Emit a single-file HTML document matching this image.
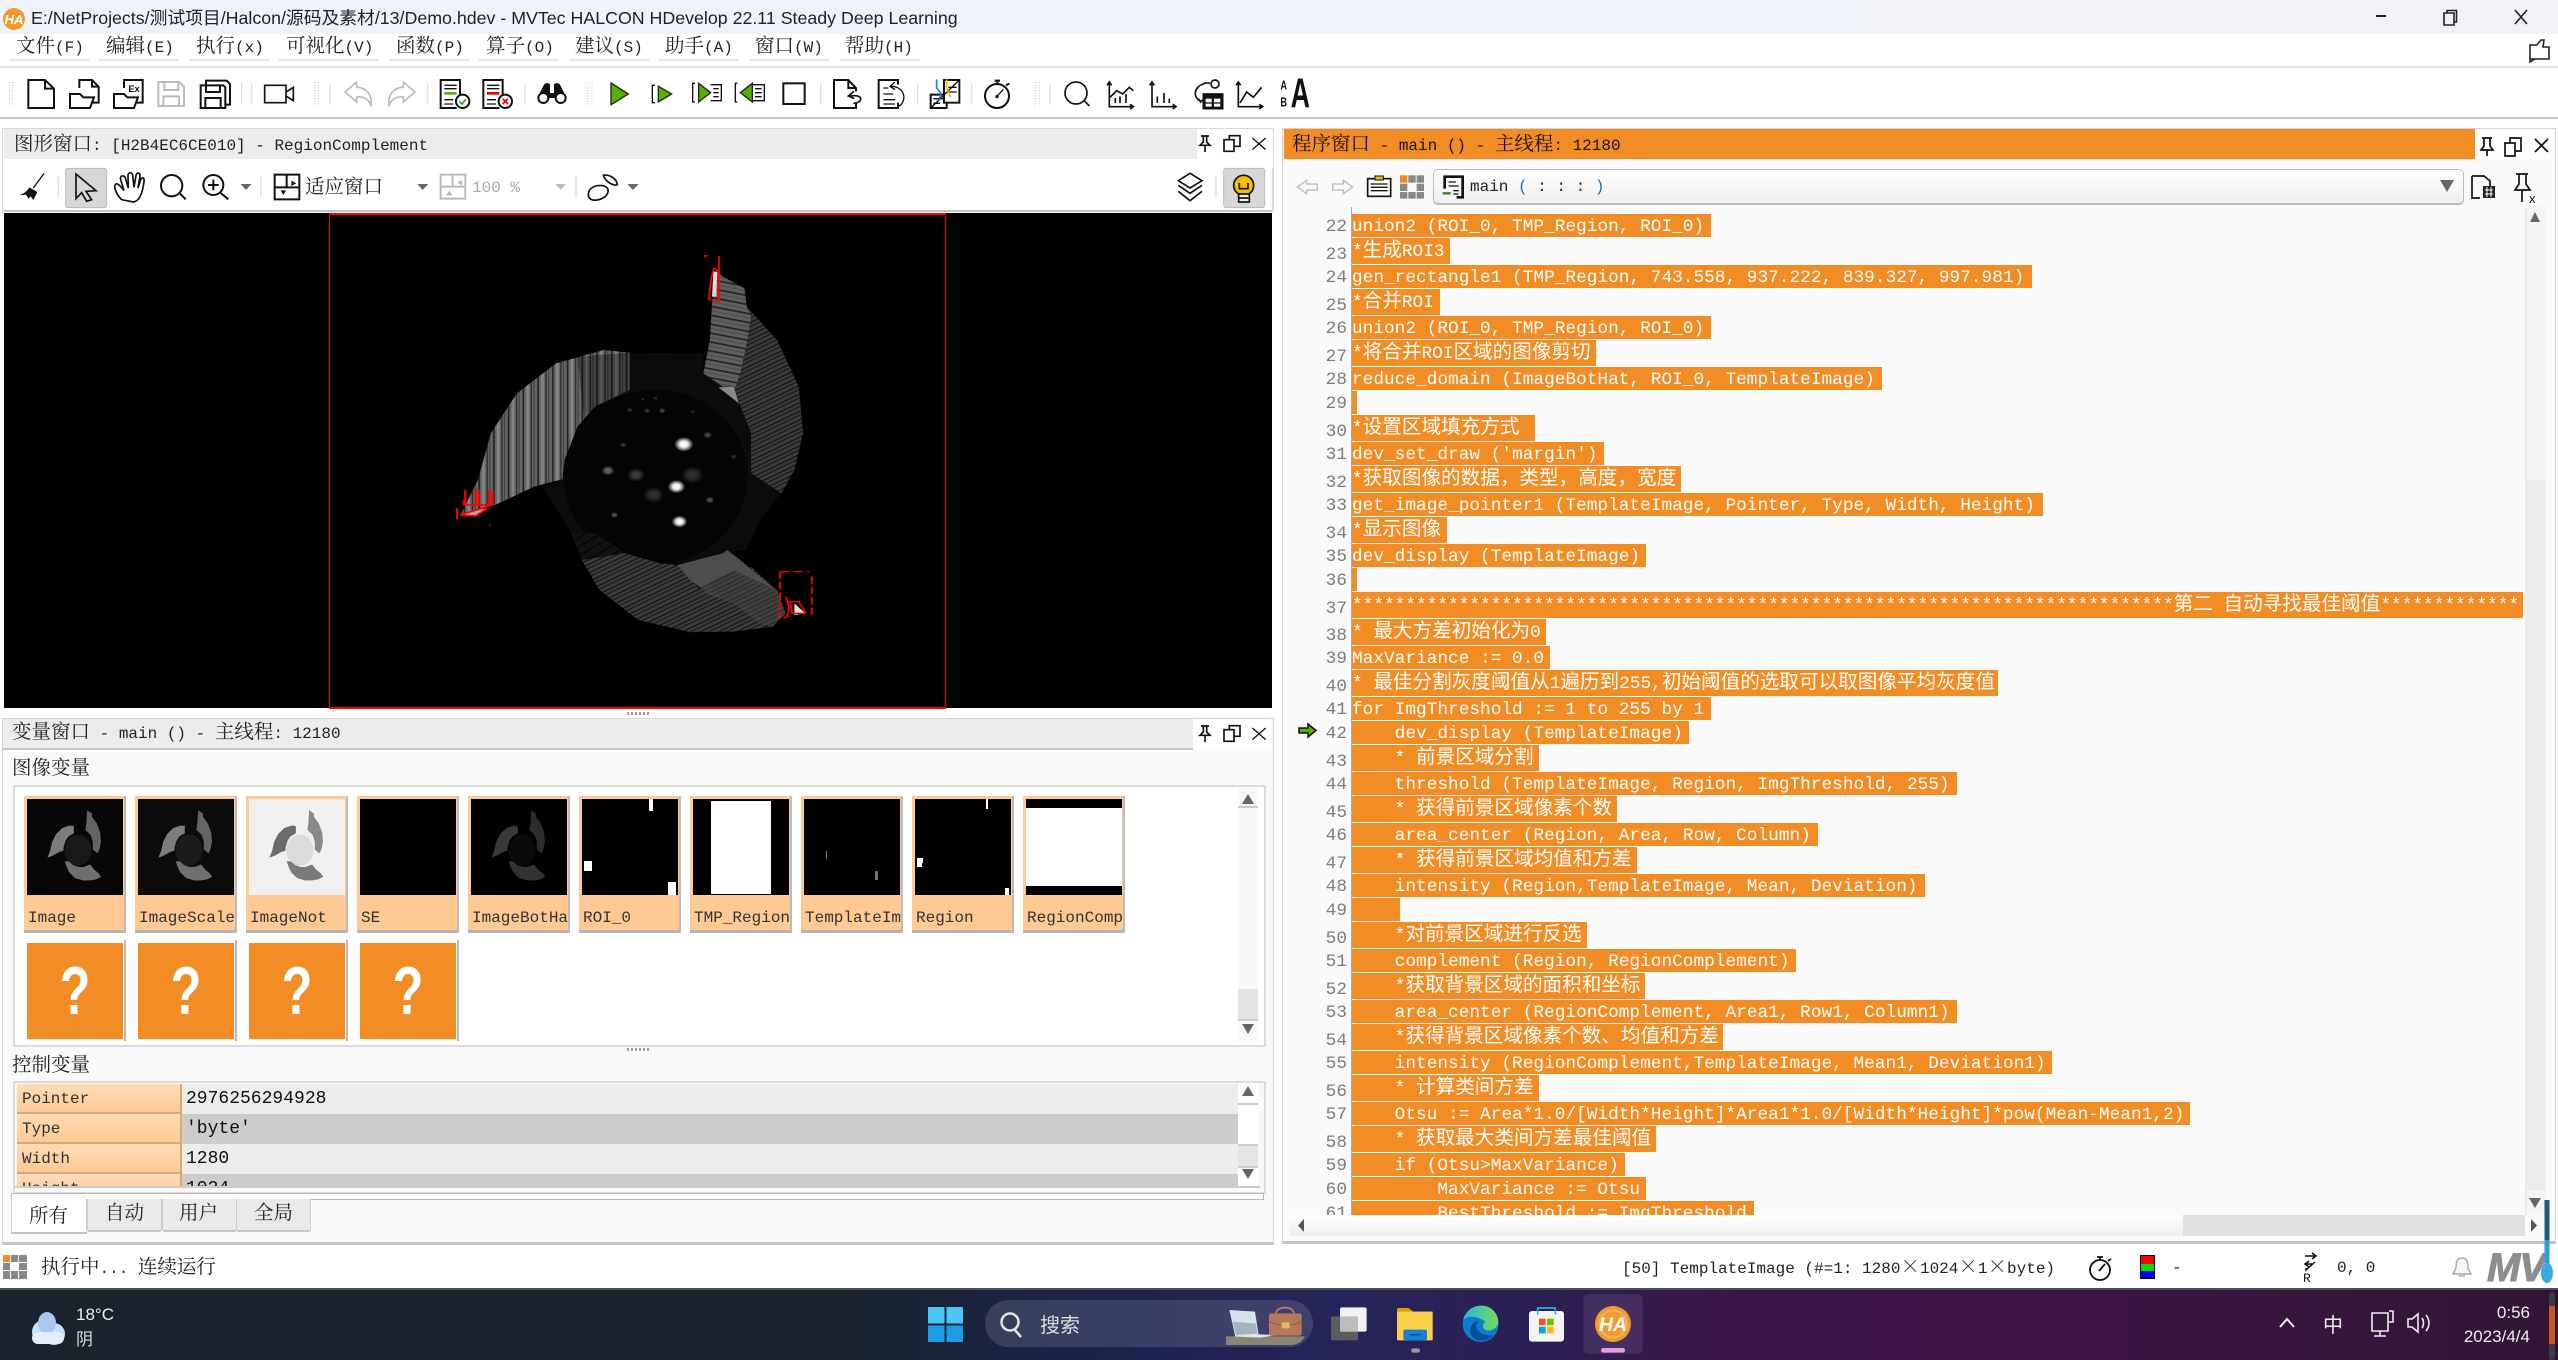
<!DOCTYPE html>
<html lang="zh"><head><meta charset="utf-8"><title>HDevelop</title>
<style>
html,body{margin:0;padding:0;width:2558px;height:1360px;overflow:hidden;background:#fff}
.a,.t,.l,.n{position:absolute}
.t{font:16px/24px "Liberation Mono","Noto Serif CJK SC",monospace;color:#222;white-space:pre}
.t s{text-decoration:none;font:19.5px/1 "Noto Serif CJK SC","Liberation Mono",serif}
.m{border-bottom:2px solid #e4e4e4;height:25px;top:34px}
.l{left:1352px;background:#f28d26;color:#fff;height:23px;font:17.8px/26px "Liberation Mono","Noto Sans CJK SC",monospace;white-space:pre;overflow:hidden}
.l s{text-decoration:none;font:19.6px/1 "Noto Sans CJK SC",sans-serif}
.k{height:26px;line-height:25px}
.n{left:1300px;width:47px;text-align:right;color:#7d7d7d;font:17.8px/26px "Liberation Mono",monospace}
.th{position:absolute;top:796px;width:100px;height:134px;background:#fec992;border-right:2px solid #bbb;border-bottom:3px solid #b5b5b5;overflow:hidden}
.th span{position:absolute;left:4px;top:110px;font:16px/24px "Liberation Mono",monospace;color:#333;white-space:pre}
.ph{position:absolute;top:940px;width:100px;height:101px;border-right:2px solid #bbb}
.ph b{position:absolute;left:3px;top:3px;width:96px;height:96px;background:#f28d26;color:#fff;font:bold 68px/96px "Liberation Sans",sans-serif;text-align:center}
.ph i{display:block;font-style:normal;transform:scaleX(.74)}
.rn{position:absolute;left:17px;width:163px;height:28px;background:linear-gradient(#ffdcb8,#fec992);border-bottom:2px solid #d8a878;border-right:2px solid #d8a878;font:16px/31px "Liberation Mono",monospace;color:#333;padding-left:0;text-indent:5px}
.rv{position:absolute;left:182px;width:1056px;height:30px;font:18px/30px "Liberation Mono",monospace;color:#111;text-indent:4px}
.tb{position:absolute;top:1199px;height:31px;background:#e9e9e9;border:1px solid #ccc;border-top:0;border-bottom:2px solid #c4c4c4;border-radius:0 0 3px 3px}
svg{position:absolute;left:0;top:0;pointer-events:none}
</style></head><body>

<!-- title bar -->
<div class="a" style="left:0;top:0;width:2558px;height:34px;background:linear-gradient(90deg,#eef3fb,#eff3fb 55%,#f2f1f5)"></div>
<div class="a" style="left:31px;top:5px;font:17.8px/26px 'Liberation Sans','Noto Sans CJK SC',sans-serif;color:#222;white-space:pre">E:/NetProjects/测试项目/Halcon/源码及素材/13/Demo.hdev - MVTec HALCON HDevelop 22.11 Steady Deep Learning</div>

<!-- menu -->
<div class="a m" style="left:9px;width:80px"></div><div class="a m" style="left:99px;width:80px"></div><div class="a m" style="left:189px;width:80px"></div><div class="a m" style="left:279px;width:100px"></div><div class="a m" style="left:389px;width:80px"></div><div class="a m" style="left:479px;width:80px"></div><div class="a m" style="left:569px;width:80px"></div><div class="a m" style="left:659px;width:80px"></div><div class="a m" style="left:750px;width:80px"></div><div class="a m" style="left:840px;width:80px"></div>
<div class="t" style="left:16px;top:35px"><s>文件</s>(F)</div>
<div class="t" style="left:106px;top:35px"><s>编辑</s>(E)</div>
<div class="t" style="left:196px;top:35px"><s>执行</s>(x)</div>
<div class="t" style="left:286px;top:35px"><s>可视化</s>(V)</div>
<div class="t" style="left:396px;top:35px"><s>函数</s>(P)</div>
<div class="t" style="left:486px;top:35px"><s>算子</s>(O)</div>
<div class="t" style="left:575px;top:35px"><s>建议</s>(S)</div>
<div class="t" style="left:665px;top:35px"><s>助手</s>(A)</div>
<div class="t" style="left:755px;top:35px"><s>窗口</s>(W)</div>
<div class="t" style="left:845px;top:35px"><s>帮助</s>(H)</div>
<div class="a" style="left:0;top:66px;width:2558px;height:2px;background:#e4e4e4"></div>
<div class="a" style="left:0;top:117px;width:2558px;height:2px;background:#c4c4c4"></div>

<!-- graphics window -->
<div class="a" style="left:2px;top:128px;width:1270px;height:84px;background:#fff;border:1px solid #d8d8d8;border-bottom:0"></div>
<div class="a" style="left:4px;top:129px;width:1193px;height:30px;background:#ececec"></div>
<div class="t" style="left:14px;top:133px"><s>图形窗口</s>: [H2B4EC6CE010] - RegionComplement</div>
<div class="a" style="left:4px;top:210px;width:1268px;height:2px;background:#c4c4c4"></div>
<div class="t" style="left:305px;top:176px"><s>适应窗口</s></div>
<div class="t" style="left:472px;top:176px;color:#aaa">100 %</div>
<div class="a" style="left:4px;top:213px;width:1268px;height:495px;background:#000"></div>
<div class="a" style="left:329px;top:213px;width:615px;height:492px;border:solid #f00;border-width:2px 1px"></div>

<!-- variables window -->
<div class="a" style="left:2px;top:718px;width:1270px;height:523px;background:#fafafa;border:1px solid #d4d4d4;border-bottom:3px solid #c4c4c4"></div>
<div class="a" style="left:3px;top:719px;width:1190px;height:29px;background:#ececec;border-bottom:2px solid #c8c8c8"></div>
<div class="a" style="left:1193px;top:719px;width:78px;height:30px;background:#fff"></div>
<div class="t" style="left:12px;top:721px"><s>变量窗口</s> - main () - <s>主线程</s>: 12180</div>
<div class="t" style="left:12px;top:757px"><s>图像变量</s></div>
<div class="a" style="left:13px;top:785px;width:1249px;height:258px;background:#fff;border:2px solid #dcdcdc"></div>
<div class="th" style="left:24px"><span>Image</span></div>
<div class="th" style="left:135px"><span>ImageScaleMax</span></div>
<div class="th" style="left:246px"><span>ImageNot</span></div>
<div class="th" style="left:357px"><span>SE</span></div>
<div class="th" style="left:468px"><span>ImageBotHat</span></div>
<div class="th" style="left:579px"><span>ROI_0</span></div>
<div class="th" style="left:690px"><span>TMP_Region</span></div>
<div class="th" style="left:801px"><span>TemplateImage</span></div>
<div class="th" style="left:912px"><span>Region</span></div>
<div class="th" style="left:1023px"><span>RegionComplement</span></div>
<div class="ph" style="left:24px"><b><i>?</i></b></div><div class="ph" style="left:135px"><b><i>?</i></b></div><div class="ph" style="left:246px"><b><i>?</i></b></div><div class="ph" style="left:357px"><b><i>?</i></b></div>
<div class="a" style="left:1238px;top:788px;width:20px;height:254px;background:#f8f8f8"></div>
<div class="a" style="left:1238px;top:806px;width:20px;height:2px;background:#ccc"></div>
<div class="a" style="left:1238px;top:989px;width:20px;height:30px;background:#e2e2e2;border-bottom:2px solid #ccc"></div>
<div class="t" style="left:12px;top:1054px"><s>控制变量</s></div>
<div class="a" style="left:13px;top:1081px;width:1249px;height:109px;background:#f8f8f8;border:2px solid #dcdcdc;overflow:hidden">
  <div class="rv" style="top:1px;left:167px;background:#ececec">2976256294928</div>
  <div class="rv" style="top:31px;left:167px;background:#ccc">'byte'</div>
  <div class="rv" style="top:61px;left:167px;background:#ececec">1280</div>
  <div class="rv" style="top:91px;left:167px;background:#ccc">1024</div>
  <div class="rn" style="left:2px;top:1px">Pointer</div>
  <div class="rn" style="left:2px;top:31px">Type</div>
  <div class="rn" style="left:2px;top:61px">Width</div>
  <div class="rn" style="left:2px;top:91px">Height</div>
  <div class="a" style="left:1223px;top:0;width:20px;height:103px;background:#fff"></div>
  <div class="a" style="left:1223px;top:61px;width:20px;height:20px;background:#e4e4e4;border:solid #ccc;border-width:2px 0"></div>
  <div class="a" style="left:1223px;top:20px;width:20px;height:2px;background:#ccc"></div>
  <div class="a" style="left:0;top:103px;width:1245px;height:6px;background:#fafafa;border-top:2px solid #ccc"></div>
</div>
<div class="a" style="left:11px;top:1193px;width:1251px;height:5px;border:1px solid #bbb"></div>
<div class="a" style="left:11px;top:1199px;width:74px;height:33px;background:#fff;border:1px solid #ccc;border-top:0;border-bottom:2px solid #c4c4c4"></div>
<div class="tb" style="left:87px;width:73px"></div><div class="tb" style="left:162px;width:73px"></div><div class="tb" style="left:236px;width:73px"></div>
<div class="t" style="left:29px;top:1205px"><s>所有</s></div>
<div class="t" style="left:105px;top:1202px"><s>自动</s></div>
<div class="t" style="left:179px;top:1202px"><s>用户</s></div>
<div class="t" style="left:254px;top:1202px"><s>全局</s></div>

<!-- program window -->
<div class="a" style="left:1282px;top:128px;width:1272px;height:1112px;background:#fafafa;border:1px solid #d4d4d4;border-bottom:3px solid #c4c4c4"></div>
<div class="a" style="left:1284px;top:129px;width:1191px;height:30px;background:#f28d26"></div>
<div class="a" style="left:2475px;top:129px;width:79px;height:30px;background:#fff"></div>
<div class="t" style="left:1292px;top:133px;color:#1a1000"><s>程序窗口</s> - main () - <s>主线程</s>: 12180</div>
<div class="a" style="left:1433px;top:169px;width:1029px;height:33px;background:linear-gradient(#fff,#efefef);border:1px solid #bbb;border-bottom:2px solid #bbb;border-radius:5px"></div>
<div class="t" style="left:1470px;top:175px">main <span style="color:#1a6fb0">(</span> : : : <span style="color:#1a6fb0">)</span></div>

<div class="a" style="left:1351px;top:207px;width:1px;height:1008px;background:#aaa"></div>
<div class="a" style="left:0;top:0;width:2523px;height:1215px;overflow:hidden">
<div class="n" style="top:214px">22</div><div class="l" style="top:214px;width:359px">union2 (ROI_0, TMP_Region, ROI_0)</div>
<div class="n" style="top:242px">23</div><div class="l k" style="top:238px;width:98px">*<s>生成</s>ROI3</div>
<div class="n" style="top:265px">24</div><div class="l" style="top:265px;width:680px">gen_rectangle1 (TMP_Region, 743.558, 937.222, 839.327, 997.981)</div>
<div class="n" style="top:293px">25</div><div class="l k" style="top:289px;width:88px">*<s>合并</s>ROI</div>
<div class="n" style="top:316px">26</div><div class="l" style="top:316px;width:359px">union2 (ROI_0, TMP_Region, ROI_0)</div>
<div class="n" style="top:344px">27</div><div class="l k" style="top:340px;width:244px">*<s>将合并</s>ROI<s>区域的图像剪切</s></div>
<div class="n" style="top:367px">28</div><div class="l" style="top:367px;width:530px">reduce_domain (ImageBotHat, ROI_0, TemplateImage)</div>
<div class="n" style="top:391px">29</div><div class="l" style="top:391px;width:5px"> </div>
<div class="n" style="top:419px">30</div><div class="l k" style="top:415px;width:183px">*<s>设置区域填充方式</s> </div>
<div class="n" style="top:442px">31</div><div class="l" style="top:442px;width:252px">dev_set_draw ('margin')</div>
<div class="n" style="top:470px">32</div><div class="l k" style="top:466px;width:329px">*<s>获取图像的数据，类型，高度，宽度</s></div>
<div class="n" style="top:493px">33</div><div class="l" style="top:493px;width:691px">get_image_pointer1 (TemplateImage, Pointer, Type, Width, Height)</div>
<div class="n" style="top:521px">34</div><div class="l k" style="top:517px;width:95px">*<s>显示图像</s></div>
<div class="n" style="top:544px">35</div><div class="l" style="top:544px;width:294px">dev_display (TemplateImage)</div>
<div class="n" style="top:568px">36</div><div class="l" style="top:568px;width:5px"> </div>
<div class="n" style="top:596px">37</div><div class="l k" style="top:592px;width:1171px">*****************************************************************************<s>第二</s> <s>自动寻找最佳阈值</s>*************</div>
<div class="n" style="top:623px">38</div><div class="l k" style="top:619px;width:194px">* <s>最大方差初始化为</s>0</div>
<div class="n" style="top:646px">39</div><div class="l" style="top:646px;width:198px">MaxVariance := 0.0</div>
<div class="n" style="top:674px">40</div><div class="l k" style="top:670px;width:646px">* <s>最佳分割灰度阈值从</s>1<s>遍历到</s>255,<s>初始阈值的选取可以取图像平均灰度值</s></div>
<div class="n" style="top:697px">41</div><div class="l" style="top:697px;width:359px">for ImgThreshold := 1 to 255 by 1</div>
<div class="n" style="top:721px">42</div><div class="l" style="top:721px;width:337px">    dev_display (TemplateImage)</div>
<div class="n" style="top:749px">43</div><div class="l k" style="top:745px;width:187px">    * <s>前景区域分割</s></div>
<div class="n" style="top:772px">44</div><div class="l" style="top:772px;width:605px">    threshold (TemplateImage, Region, ImgThreshold, 255)</div>
<div class="n" style="top:800px">45</div><div class="l k" style="top:796px;width:265px">    * <s>获得前景区域像素个数</s></div>
<div class="n" style="top:823px">46</div><div class="l" style="top:823px;width:466px">    area_center (Region, Area, Row, Column)</div>
<div class="n" style="top:851px">47</div><div class="l k" style="top:847px;width:285px">    * <s>获得前景区域均值和方差</s></div>
<div class="n" style="top:874px">48</div><div class="l" style="top:874px;width:573px">    intensity (Region,TemplateImage, Mean, Deviation)</div>
<div class="n" style="top:898px">49</div><div class="l" style="top:898px;width:48px"> </div>
<div class="n" style="top:926px">50</div><div class="l k" style="top:922px;width:235px">    *<s>对前景区域进行反选</s></div>
<div class="n" style="top:949px">51</div><div class="l" style="top:949px;width:444px">    complement (Region, RegionComplement)</div>
<div class="n" style="top:977px">52</div><div class="l k" style="top:973px;width:293px">    *<s>获取背景区域的面积和坐标</s></div>
<div class="n" style="top:1000px">53</div><div class="l" style="top:1000px;width:605px">    area_center (RegionComplement, Area1, Row1, Column1)</div>
<div class="n" style="top:1028px">54</div><div class="l k" style="top:1024px;width:371px">    *<s>获得背景区域像素个数、均值和方差</s></div>
<div class="n" style="top:1051px">55</div><div class="l" style="top:1051px;width:700px">    intensity (RegionComplement,TemplateImage, Mean1, Deviation1)</div>
<div class="n" style="top:1079px">56</div><div class="l k" style="top:1075px;width:187px">    * <s>计算类间方差</s></div>
<div class="n" style="top:1102px">57</div><div class="l" style="top:1102px;width:838px">    Otsu := Area*1.0/[Width*Height]*Area1*1.0/[Width*Height]*pow(Mean-Mean1,2)</div>
<div class="n" style="top:1130px">58</div><div class="l k" style="top:1126px;width:304px">    * <s>获取最大类间方差最佳阈值</s></div>
<div class="n" style="top:1153px">59</div><div class="l" style="top:1153px;width:273px">    if (Otsu&gt;MaxVariance)</div>
<div class="n" style="top:1177px">60</div><div class="l" style="top:1177px;width:294px">        MaxVariance := Otsu</div>
<div class="n" style="top:1201px">61</div><div class="l" style="top:1201px;width:402px">        BestThreshold := ImgThreshold</div>
</div>
<!-- program scrollbars -->
<div class="a" style="left:2525px;top:207px;width:20px;height:1008px;background:#f4f4f4;border-left:1px solid #e4e4e4"></div>
<div class="a" style="left:2525px;top:480px;width:20px;height:710px;background:#ebebeb"></div>
<div class="a" style="left:1290px;top:1215px;width:893px;height:21px;background:linear-gradient(#fff,#eee)"></div>
<div class="a" style="left:2183px;top:1215px;width:342px;height:21px;background:#e0e0e0"></div>

<!-- status bar -->
<div class="t" style="left:41px;top:1256px"><s>执行中</s>... <s>连续运行</s></div>
<div class="t" style="left:1622px;top:1256px">[50] TemplateImage (#=1: 1280<s>×</s>1024<s>×</s>1<s>×</s>byte)</div>
<div class="t" style="left:2172px;top:1256px">-</div>
<div class="t" style="left:2337px;top:1256px">0, 0</div>
<div class="a" style="left:2487px;top:1250px;width:58px;height:36px;overflow:hidden;font:italic bold 40px/36px 'Liberation Sans',sans-serif;color:#8d8d8d;letter-spacing:-1px;-webkit-text-stroke:1px #8d8d8d">MV</div>

<!-- taskbar -->
<div class="a" style="left:0;top:1288px;width:2558px;height:72px;background:linear-gradient(90deg,#1a232b 0,#1a232b 32%,#1c234e 44%,#25245a 52%,#2b1f55 60%,#3b1549 68%,#3c1542 82%,#301634 100%);border-top:2px solid #4a4c5a;box-sizing:border-box"></div>
<div class="a" style="left:985px;top:1300px;width:328px;height:47px;border-radius:24px;background:rgba(255,255,255,.13)"></div>
<div class="a" style="left:76px;top:1303px;font:17px/24px 'Liberation Sans',sans-serif;color:#eee">18°C</div>
<div class="a" style="left:76px;top:1326px;font:17px/24px 'Noto Sans CJK SC',sans-serif;color:#ddd">阴</div>
<div class="a" style="left:1040px;top:1310px;font:20px/28px 'Noto Sans CJK SC',sans-serif;color:#ddd">搜索</div>
<div class="a" style="left:2323px;top:1310px;font:20px/28px 'Noto Sans CJK SC',sans-serif;color:#eee">中</div>
<div class="a" style="left:2430px;width:100px;text-align:right;top:1301px;font:17px/24px 'Liberation Sans',sans-serif;color:#eee">0:56</div>
<div class="a" style="left:2430px;width:100px;text-align:right;top:1325px;font:17px/24px 'Liberation Sans',sans-serif;color:#eee">2023/4/4</div>

<svg width="2558" height="1360" viewBox="0 0 2558 1360" fill="none">
<defs>
<pattern id="pv" width="34" height="40" patternUnits="userSpaceOnUse">
 <rect width="34" height="40" fill="#666"/><rect x="3" width="4" height="40" fill="#232323"/><rect x="12" width="6" height="40" fill="#858585"/><rect x="22" width="3" height="40" fill="#2b2b2b"/><rect x="28" width="3" height="40" fill="#444"/>
</pattern>
<pattern id="pd" width="44" height="22" patternUnits="userSpaceOnUse" patternTransform="rotate(-32)">
 <rect width="44" height="22" fill="#3c3c3c"/><rect y="2" width="44" height="4" fill="#151515"/><rect y="12" width="44" height="4" fill="#1b1b1b"/>
</pattern>
<pattern id="pu" width="60" height="26" patternUnits="userSpaceOnUse" patternTransform="rotate(14)">
 <rect width="60" height="26" fill="#5f5f5f"/><rect y="0" width="60" height="5" fill="#242424"/><rect y="14" width="60" height="2" fill="#414141"/>
</pattern>
<pattern id="pc" width="18" height="22" patternUnits="userSpaceOnUse" patternTransform="rotate(-38)">
 <rect width="18" height="22" fill="#131313"/><rect y="4" width="18" height="4" fill="#040404"/>
</pattern>
<radialGradient id="sp"><stop offset="0" stop-color="#fff"/><stop offset=".4" stop-color="#eee"/><stop offset="1" stop-color="#fff" stop-opacity="0"/></radialGradient>
<linearGradient id="eg" x1="0" x2="1"><stop offset="0" stop-color="#22b8dc"/><stop offset="1" stop-color="#74dc58"/></linearGradient>
<g id="bt" fill="currentColor">
 <path opacity=".9" d="M370 945 410 840 440 700 500 580 590 490 700 450 760 458V570L680 620 640 680 610 780 605 838 540 860 450 915Z"/>
 <path opacity=".7" d="M960 210 975 230 1025 265 1030 320 1100 420 1150 560 1160 700 1140 810 1110 880 1040 820 1040 700 1010 600 975 560 930 520 945 420 950 310Z"/>
 <path opacity=".8" d="M625 1000 650 1080 690 1170 780 1260 900 1297 1000 1295 1090 1280 1165 1240 1130 1190 1060 1130 1000 1050 975 1060 900 1090 830 1090 750 1060 680 1000Z"/>
 <ellipse cx="820" cy="830" rx="200" ry="240" opacity=".14"/>
</g>
</defs>

<!-- main image -->
<g transform="translate(300 200) scale(.4337 .3333)">
 <path fill="#0b0b0b" d="M605 838 760 458 930 460 930 520 975 560 1010 600 1040 700 1040 820 1110 880 1060 960 1030 1050 975 1060 900 1090 830 1090 750 1060 680 1000 625 1000 560 860Z"/>
 <ellipse cx="820" cy="830" rx="212" ry="262" fill="#040404"/>
 <path fill="url(#pv)" d="M370 945 410 840 440 700 500 580 590 490 700 450 760 458V570L680 620 640 680 610 780 605 838 540 860 450 915Z"/>
 <path fill="#000" opacity=".35" d="M640 470 760 458V570L680 620 655 660Z"/>
 <path fill="url(#pd)" d="M1030 320 1100 420 1150 560 1160 700 1140 810 1110 880 1040 820 1040 700 1010 600 1000 560Z"/>
 <path fill="url(#pu)" d="M960 210 975 230 1025 265 1030 320 1040 350 1030 430 1015 520 1005 560 975 560 930 520 945 420 950 310Z"/>
 <path fill="#8a8a8a" d="M965 562 1000 560 1012 610Z"/>
 <path fill="url(#pc)" d="M625 1000 650 1080 700 1180 780 1160 860 1090 830 1090 750 1060 680 1000Z" opacity=".9"/>
 <path fill="url(#pd)" d="M650 1080 690 1170 780 1260 900 1297 1000 1295 1090 1280 1120 1240 1090 1160 1040 1100 960 1170 920 1165 870 1095 830 1090 750 1060Z"/>
 <path fill="#4e4e4e" d="M870 1095 975 1060 985 1050 1010 1075 1060 1130 1100 1170 1120 1240 1090 1280 1060 1270 1000 1210 940 1180 900 1140Z"/>
 <path fill="url(#pd)" opacity=".6" d="M920 1165 1000 1110 1100 1170 1120 1240 1090 1280 1060 1270 1000 1210Z"/>
 <path fill="#aaa" d="M378 940 430 925 405 948 380 948Z"/><path fill="#ddd" d="M953 215 962 215 960 290 950 290Z"/><path fill="#ddd" d="M1140 1210 1165 1240 1140 1245Z"/>
 <g fill="url(#sp)">
  <circle cx="885" cy="733" r="22"/><circle cx="868" cy="860" r="20"/><circle cx="875" cy="965" r="18"/>
  <circle cx="710" cy="812" r="15" opacity=".38"/><circle cx="775" cy="825" r="20" opacity=".22"/><circle cx="815" cy="885" r="24" opacity=".17"/><circle cx="905" cy="825" r="26" opacity=".17"/><circle cx="945" cy="900" r="10" opacity=".3"/><circle cx="725" cy="945" r="9" opacity=".3"/><circle cx="940" cy="705" r="10" opacity=".25"/><circle cx="745" cy="735" r="8" opacity=".2"/><circle cx="835" cy="632" r="8" opacity=".25"/><circle cx="800" cy="632" r="7" opacity=".2"/><circle cx="760" cy="630" r="7" opacity=".17"/><circle cx="820" cy="595" r="6" opacity=".15"/><circle cx="790" cy="598" r="5" opacity=".15"/><circle cx="1000" cy="770" r="8" opacity=".15"/><circle cx="905" cy="635" r="6" opacity=".14"/>
 </g>
 <g stroke="#f00" stroke-width="4">
  <path d="M966 168V300M933 172V167H940M955 205C945 235 945 280 943 298L965 305V212Z"/>
  <path d="M381 870V915H444V870M405 870V915M412 870V915M436 870V915M378 900V915M368 945 420 925 446 912M368 945 405 948 432 925M362 925V957M437 976H440" stroke-width="5"/>
  <path d="M1107 1115V1255M1107 1115H1175M1180 1130V1255" stroke-dasharray="22 9"/>
  <path d="M1120 1190C1130 1225 1130 1250 1115 1255M1130 1205H1150L1166 1240H1135Z"/>
 </g>
</g>
<!-- grips on splitters -->
<g fill="#9a9a9a">
 <path d="M627 712h2v3h-2zM631 712h2v3h-2zM635 712h2v3h-2zM639 712h2v3h-2zM643 712h2v3h-2zM647 712h2v3h-2zM627 1048h2v3h-2zM631 1048h2v3h-2zM635 1048h2v3h-2zM639 1048h2v3h-2zM643 1048h2v3h-2zM647 1048h2v3h-2z"/>
</g>

<!-- thumbnails -->
<rect x="27" y="799" width="96" height="96" fill="#070707"/><rect x="138" y="799" width="96" height="96" fill="#0b0b0b"/><rect x="249" y="799" width="96" height="96" fill="#f0f0f0"/><rect x="360" y="799" width="96" height="96" fill="#000"/><rect x="471" y="799" width="96" height="96" fill="#000"/><rect x="582" y="799" width="96" height="96" fill="#000"/><rect x="693" y="799" width="96" height="96" fill="#000"/><rect x="804" y="799" width="96" height="96" fill="#000"/><rect x="915" y="799" width="96" height="96" fill="#000"/><rect x="1026" y="799" width="96" height="96" fill="#000"/>
<use href="#bt" transform="translate(22.4 796.2) scale(.0677 .065)" style="color:#8a8a8a"/>
<use href="#bt" transform="translate(133.4 796.2) scale(.0677 .065)" style="color:#8a8a8a"/>
<use href="#bt" transform="translate(244.4 796.2) scale(.0677 .065)" style="color:#5c5c5c"/>
<use href="#bt" transform="translate(466.4 796.2) scale(.0677 .065)" style="color:#3e3e3e"/>
<path fill="#fff" d="M649 799h4v12h-4zM584 861h8v10h-8zM668 882h8v13h-8zM711 801h60v93h-60zM986 799h2v10h-2zM917 858h5v9h-5zM920 858h3v5h-3zM1005 888h4v7h-4zM1026 808h96v78h-96z"/>
<path fill="#777" d="M826 851h1v8h-1zM875 871h3v9h-3z"/>
<!-- var scrollbar arrows -->
<path fill="#666" d="M1242 804 1248 794 1254 804ZM1242 1024 1248 1034 1254 1024ZM1242 1096 1248 1086 1254 1096ZM1242 1169 1248 1179 1254 1169Z"/>

<!-- window caption -->
<circle cx="14" cy="19" r="11" fill="#f39a2e"/>
<text x="14" y="24" text-anchor="middle" font-family="Liberation Sans" font-size="13" font-weight="bold" font-style="italic" fill="#fff">HA</text>
<path stroke="#222" stroke-width="2" d="M2376 16H2386"/>
<path stroke="#222" stroke-width="1.6" d="M2444 13h10v12h-10zM2447 13v-2.500h9.500V22h-2.500M2515 10 2527 24M2527 10 2515 24"/>
<path stroke="#222" stroke-width="1.6" fill="#fff" d="M2530 45H2537L2541 40H2544L2543 47H2549V59H2530ZM2530 45V62L2535 59"/>

<!-- zoom 9 icons -->
<g transform="translate(0 68) scale(.33333)" stroke="#111" stroke-width="6">
 <path d="M85 36H135L162 62V120H85ZM135 36V62H162"/>
 <path d="M238 60V36H276L296 56V104H278M276 36V56H296M210 120V78H240L250 88H282L270 120Z"/>
 <path d="M372 60V36H428V104H410M342 120V78H372L382 88H414L402 120Z"/>
 <text x="385" y="72" font-family="Liberation Sans" font-size="28" font-weight="bold" fill="#111" stroke="none">Ex</text>
 <path stroke="#bbb" d="M475 42H538L552 56V114H475ZM493 42V66H535V42M490 114V85H537V114"/>
 <path d="M602 120V52H670L676 58V120ZM618 52V38H680L690 48V110H676M618 52V72H660V52M616 120V90H662V120"/>
 <path stroke="#ddd" stroke-width="4" d="M725 45V110M755 45V110M990 45V110M1283 45V110M175 325V388M783 325V388M1450 45V110"/>
 <path stroke-width="5" d="M794 52H858V104H794ZM858 72 880 58V98L858 84"/>
 <path stroke="#bbb" stroke-width="3" stroke-dasharray="3 5" d="M28 42V115M38 42V115M945 42V115M955 42V115"/>
 <path stroke="#bbb" stroke-width="5" d="M1035 72 1070 42V58C1100 58 1116 80 1114 114 1105 92 1090 86 1070 86V102ZM1245 72 1210 42V58C1180 58 1164 80 1166 114 1175 92 1190 86 1210 86V102Z"/>
 <path d="M1370 120H1322V36H1380V80"/>
 <path stroke-width="4" d="M1333 52H1370M1333 62H1370M1333 95H1360M1333 108H1360"/>
 <path stroke="#5cb000" stroke-width="8" d="M1333 76H1370"/>
 <circle cx="1388" cy="100" r="20" fill="#fff"/><path stroke="#3fa300" stroke-width="5" d="M1378 100 1386 108 1398 94"/>
 <path d="M1498 120H1450V36H1508V80"/>
 <path stroke-width="4" d="M1461 52H1498M1461 62H1498M1461 95H1488M1461 108H1488"/>
 <path stroke="#e00" stroke-width="8" d="M1461 76H1498"/>
 <circle cx="1516" cy="100" r="20" fill="#fff"/><path stroke="#e00" stroke-width="5" d="M1508 92 1524 108M1524 92 1508 108"/>
 <rect x="197" y="301" width="123" height="118" rx="8" fill="#d7d7d7" stroke="#bbb" stroke-width="3"/>
 <path stroke-width="4" d="M132 316 100 360"/><path fill="#111" stroke="none" d="M88 358 112 372 100 396 92 385 85 392 78 380 58 382C75 375 82 368 88 358Z"/>
 <path stroke-width="5" d="M228 318 288 368 258 370 275 395 260 400 245 374 228 392Z"/>
 <path stroke-width="5" d="M365 395C350 380 342 360 345 352 350 340 362 355 372 368L362 335C358 322 372 320 376 330L385 360 384 322C384 312 398 312 398 322L402 358 408 322C410 312 422 314 420 324L414 360 422 335C426 325 434 330 432 340 428 375 418 400 400 402Z"/>
 <circle cx="515" cy="353" r="32"/><path d="M540 377 557 394"/>
 <circle cx="640" cy="351" r="30"/><path d="M662 375 685 394M624 351H656M640 335V367"/>
 <path fill="#666" stroke="none" d="M722 348H754L738 366ZM1252 348H1285L1268 366Z"/>
 <path d="M824 320H898V394H824ZM860 320V358H898M824 358H860"/><path fill="#111" stroke="none" d="M874 338 889 346 874 354ZM842 367H858L850 381Z"/>
 <path stroke="#bbb" d="M1322 320H1396V392H1322ZM1358 320V356H1396M1322 356H1358"/><path fill="#bbb" stroke="none" d="M1386 336 1372 344 1386 352ZM1338 382H1358L1348 368Z"/>
</g>
<!-- zoom 10 icons -->
<g transform="translate(520 68) scale(.33333)" stroke="#111" stroke-width="6">
 <path stroke="#ddd" stroke-width="4" d="M15 45V110M902 45V110M1193 45V110M1355 45V110M168 325V388"/>
 <path stroke="#bbb" stroke-width="3" stroke-dasharray="3 5" d="M204 42V115M216 42V115M1546 42V115M1558 42V115"/>
 <path fill="#111" stroke="none" d="M52 90 72 50C76 44 88 44 90 50V75H102V50C104 44 116 44 120 50L140 90Z"/>
 <circle cx="70" cy="90" r="15" fill="#fff"/><circle cx="122" cy="90" r="15" fill="#fff"/>
 <path fill="#55b000" stroke="#222" stroke-width="4" d="M273 45 325 78 273 110Z"/>
 <path stroke-width="4" d="M405 52H397V104H405"/><path fill="#55b000" stroke="#222" stroke-width="4" d="M415 55 455 78 415 102Z"/>
 <path stroke-width="4" d="M525 46H518V102H525M652 46H646V102H652"/>
 <path fill="#55b000" stroke="#222" stroke-width="4" d="M536 46 572 74 536 102ZM697 46 661 74 697 102Z"/>
 <path stroke-width="4" d="M572 50H604V98H572M580 62H596M580 74H596M580 86H596M697 50H733V98H697M705 62H725M705 74H725M705 86H725"/>
 <rect x="790" y="46" width="64" height="62"/>
 <path d="M1008 104V120H942V36H985L1008 60V70M985 36V60H1008"/>
 <path stroke-width="5" d="M1002 70 985 84 1003 92M988 85C1030 75 1032 105 1000 106"/>
 <path d="M1134 104V120H1076V36H1134V50"/>
 <path stroke-width="4" d="M1090 60H1105M1090 78H1120M1090 95H1125M1090 108H1125"/>
 <path stroke-width="4" d="M1125 42 1110 55 1125 65M1112 55C1160 55 1160 105 1135 115"/>
 <path d="M1232 80H1280V120H1232ZM1272 36H1318V104H1272Z"/><path fill="#fff" stroke="none" d="M1275 39H1315V101H1275Z"/>
 <path stroke-width="4" d="M1240 92H1272M1240 106H1260M1285 58H1310M1285 72H1310M1232 120 1318 36"/>
 <path stroke="#0a84ff" stroke-width="5" d="M1250 34V60L1262 75 1258 95"/>
 <path stroke="#f0b400" stroke-width="5" d="M1280 34V60L1292 88"/>
 <circle cx="1431" cy="84" r="36"/><path d="M1424 38H1440M1432 38V48M1458 52 1468 46"/><path stroke-width="4" d="M1430 86 1450 64"/><circle cx="1431" cy="86" r="5" fill="#111" stroke="none"/>
 <path fill="#bbb" stroke="none" d="M106 348H138L122 366Z"/>
 <path stroke-width="5" d="M205 380C205 360 225 350 250 353 270 358 270 380 245 392 225 400 205 398 205 380ZM250 322C265 318 290 330 292 350 280 355 255 340 250 322Z"/>
 <path fill="#666" stroke="none" d="M322 348H356L339 366Z"/>
</g>
<!-- zoom 11 icons -->
<g transform="translate(1040 68) scale(.33333)" stroke="#111" stroke-width="5">
 <path stroke="#ddd" stroke-width="4" d="M30 45V110M528 325V388M697 300V430"/>
 <circle cx="108" cy="75" r="33"/><path d="M133 98 148 114"/>
 <path d="M208 42V116H280M201 52 208 42 215 52M270 109 280 116 270 123M210 88 230 68 248 78 268 58 280 68M226 105V90M240 105V85M258 105V78"/>
 <path d="M336 42V116H408M329 52 336 42 343 52M398 109 408 116 398 123M352 105V85M372 105V75M388 105V92"/>
 <path d="M482 100C455 85 465 55 490 48 496 44 502 44 510 46M475 92 482 102 490 94"/><circle cx="525" cy="48" r="12"/>
 <rect x="490" y="78" width="58" height="44" fill="#111"/><path fill="#fff" stroke="none" d="M497 92H515V103H497ZM497 107H515V116H497ZM522 92H541V103H522ZM522 107H541V116H522Z"/>
 <path d="M595 42V116H668M588 52 595 42 602 52M658 109 668 116 658 123M600 105 620 72 640 88 665 58"/>
 <text x="752" y="118" font-family="Liberation Sans" font-size="125" font-weight="bold" fill="#111" stroke="none" textLength="58" lengthAdjust="spacingAndGlyphs">A</text>
 <text x="721" y="64" font-family="Liberation Sans" font-size="40" font-weight="bold" fill="#111" stroke="none" textLength="20" lengthAdjust="spacingAndGlyphs">A</text>
 <text x="721" y="116" font-family="Liberation Sans" font-size="40" font-weight="bold" fill="#111" stroke="none" textLength="20" lengthAdjust="spacingAndGlyphs">B</text>
 <path d="M483 204H507M490 204V222L480 232H510L500 222V204M495 232V252"/>
 <path d="M552 215H582V250H552ZM568 215V203H600V235H582"/>
 <path stroke-width="4" d="M637 210 677 245M677 210 637 245"/>
 <path d="M450 316 486 338 450 360 415 338ZM415 352 450 376 486 352M415 370 450 398 486 370"/>
 <rect x="551" y="301" width="123" height="118" rx="8" fill="#d7d7d7" stroke="#bbb" stroke-width="3"/>
 <circle cx="611" cy="352" r="30" fill="#f0c000"/><path d="M598 345V362H624V345"/><rect x="596" y="378" width="32" height="24" fill="#eee"/><path d="M596 390H628"/>
 <path stroke="#bbb" stroke-width="4" fill="#f8f8f8" d="M772 357 800 337V348H832V366H800V377ZM938 357 910 337V348H878V366H910V377Z"/>
 <rect x="983" y="332" width="69" height="53" fill="#fff"/><rect x="1005" y="324" width="25" height="12" fill="#f0c000" stroke-width="3"/><path stroke-width="4" d="M992 348H1043M992 358H1043M992 368H1043"/>
 <g stroke="none" fill="#888"><rect x="1080" y="322" width="22" height="22" fill="#f28d26"/><rect x="1105" y="322" width="22" height="22"/><rect x="1130" y="322" width="22" height="22"/><rect x="1080" y="347" width="22" height="22"/><rect x="1130" y="347" width="22" height="22"/><rect x="1080" y="372" width="22" height="20"/><rect x="1105" y="372" width="22" height="20"/><rect x="1130" y="372" width="22" height="20"/></g>
 <path fill="#111" stroke="none" d="M1210 322H1272V392H1250V384H1264V330H1218V362H1210Z"/>
 <path stroke-width="4" d="M1226 342H1248M1226 354H1256M1240 368H1256M1240 378H1256"/>
 <path stroke="#3d7a1e" stroke-width="7" d="M1208 376H1232"/>
</g>
<!-- variables window caption icons -->
<g transform="translate(1040 658) scale(.33333)" stroke="#111" stroke-width="5">
 <path d="M483 204H507M490 204V222L480 232H510L500 222V204M495 232V252"/>
 <path d="M552 215H582V250H552ZM568 215V203H600V235H582"/>
 <path stroke-width="4" d="M637 210 677 245M677 210 637 245"/>
</g>
<!-- right panel -->
<g stroke="#111" stroke-width="1.700">
 <path d="M2482 138H2492M2484 138V146L2481 150H2493L2490 146V138M2487 150V156"/>
 <path d="M2505 143H2515V156H2505ZM2510 143V138H2521V151H2515"/>
 <path d="M2535 139 2548 152M2548 139 2535 152"/>
 <path d="M2472 176H2484L2490 181V186M2472 176V198H2480"/>
 <path d="M2516 174H2528M2519 174V184L2515 190H2530L2526 184V174M2522 190V202"/>
</g>
<rect x="2483" y="186" width="12" height="12" fill="#222"/><path stroke="#fff" stroke-width="1" d="M2485 190H2493M2485 194H2493M2487 187V197M2491 187V197"/>
<text x="2529" y="203" font-family="Liberation Sans" font-size="13" fill="#111">x</text>
<path fill="#666" d="M2440 180H2454L2447 192Z"/>
<path fill="#666" d="M2530 222H2540L2535 212ZM2529 1198H2541L2535 1208Z"/>
<path fill="#555" d="M1304 1219V1232L1298 1225.500ZM2531 1219V1232L2537 1225.500Z"/>
<path fill="#55b000" stroke="#111" stroke-width="1.500" d="M1299 728H1308V724L1316 730.500 1308 737V733H1299Z"/>

<!-- status bar icons -->
<g><rect x="3" y="1255" width="7" height="7" fill="#f28d26"/><rect x="11" y="1255" width="7" height="7" fill="#888"/><rect x="19" y="1255" width="8" height="7" fill="#888"/><rect x="3" y="1263" width="7" height="7" fill="#888"/><rect x="19" y="1263" width="8" height="7" fill="#888"/><rect x="3" y="1271" width="7" height="8" fill="#888"/><rect x="11" y="1271" width="7" height="8" fill="#888"/><rect x="19" y="1271" width="8" height="8" fill="#888"/></g>
<g stroke="#111" stroke-width="1.800"><circle cx="2100" cy="1270" r="10"/><path d="M2097 1257H2103M2100 1257V1260M2108 1261 2111 1259M2099 1271 2105 1264"/></g>
<rect x="2140" y="1255" width="15" height="24" fill="#000"/><rect x="2141" y="1256" width="13" height="8" fill="#f00"/><rect x="2141" y="1264" width="13" height="7" fill="#0d0"/><rect x="2141" y="1271" width="13" height="7" fill="#00e"/>
<g stroke="#111" stroke-width="1.500"><path d="M2305 1256H2316M2312 1253 2316 1256 2312 1259M2309 1261 2305 1264 2309 1267M2305 1264H2312M2306 1268V1270L2315 1262"/></g>
<text x="2303" y="1282" font-family="Liberation Mono" font-size="13" fill="#111">R</text>
<path fill="#f4f4f4" stroke="#aaa" stroke-width="1.500" d="M2462 1258C2467 1258 2468 1262 2468 1268L2471 1274H2453L2456 1268C2456 1262 2457 1258 2462 1258ZM2459 1276H2465"/>
<rect x="2544.500" y="1200" width="5" height="42" fill="#1f5d7d"/><rect x="2544.500" y="1240" width="5" height="32" fill="#2c9fd8"/><ellipse cx="2547" cy="1273" rx="6" ry="10" fill="#3aa9e0"/>

<!-- taskbar icons -->
<g fill="#c9defc"><circle cx="44" cy="1332" r="12"/><circle cx="54" cy="1334" r="11"/><ellipse cx="47" cy="1323" rx="9" ry="11" fill="#a8c8f4"/><rect x="32" y="1332" width="32" height="12" rx="6" fill="#e0eeff"/></g>
<g fill="#4cc6f4"><rect x="928" y="1307" width="16.500" height="16.500"/><rect x="946.500" y="1307" width="16.500" height="16.500"/><rect x="928" y="1325.500" width="16.500" height="16.500" fill="#1c9de4"/><rect x="946.500" y="1325.500" width="16.500" height="16.500" fill="#1c9de4"/></g>
<circle cx="1010" cy="1322" r="8.500" stroke="#e4e4e4" stroke-width="2.500"/><path stroke="#e4e4e4" stroke-width="2.500" d="M1015 1330 1021 1337"/>
<g transform="translate(1200 1285) scale(.33333)">
 <path fill="#8a8676" d="M78 154H315C305 172 290 180 270 180H78Z"/>
 <path fill="#d5e2ec" d="M88 75 165 80 176 150 106 155Z"/><path fill="#9fb4bd" d="M98 110 168 116 172 146 108 150Z"/>
 <path fill="#dfe5ec" d="M106 155 176 148 232 150 180 158Z"/>
 <path stroke="#b58259" stroke-width="5" d="M228 85C230 62 280 62 282 85"/>
 <rect x="207" y="85" width="98" height="67" rx="7" fill="#b5795a"/><path stroke="#8c5a40" stroke-width="3" d="M207 110C240 125 272 125 305 110"/><rect x="245" y="112" width="24" height="18" rx="3" fill="#e8b860"/>
 <rect x="393" y="94" width="81" height="72" rx="6" fill="#5c5c5c"/><rect x="420" y="67" width="80" height="73" rx="6" fill="#f2f2f2"/><rect x="420" y="94" width="54" height="46" rx="3" fill="#bcbcbc"/>
 <path fill="#dda200" d="M591 84V74C591 70 594 69 598 69H625L640 80H698V90H591Z"/><rect x="591" y="80" width="107" height="86" rx="3" fill="#fcd24c"/><rect x="610" y="134" width="71" height="32" rx="6" fill="#1a80d4"/><path stroke="#0b4d96" stroke-width="4" d="M630 149H662"/><rect x="634" y="190" width="26" height="13" rx="6" fill="#9a95a5"/>
 <circle cx="842" cy="117" r="54" fill="#0f7ccc"/><path fill="url(#eg)" d="M790 105C800 58 860 48 885 82 902 105 896 132 870 136 850 140 842 122 856 110 830 90 802 92 790 105Z"/><path fill="#0b4f9c" d="M832 166C800 152 805 112 838 106 822 122 825 150 880 152 868 162 850 170 832 166Z"/>
 <rect x="987" y="78" width="105" height="92" rx="9" fill="#f4f4f4"/><path stroke="#29a8e8" stroke-width="5" d="M1013 88V69H1066V88"/><rect x="1017" y="101" width="20" height="20" fill="#f25022"/><rect x="1041" y="101" width="20" height="20" fill="#7fba00"/><rect x="1017" y="125" width="20" height="20" fill="#00a4ef"/><rect x="1041" y="125" width="20" height="20" fill="#ffb900"/>
 <rect x="1150" y="28" width="178" height="178" rx="14" fill="#fff" fill-opacity=".09"/><circle cx="1239" cy="117" r="54" fill="#f39a2e"/><circle cx="1239" cy="117" r="40" stroke="#f7b35d" stroke-width="6"/>
 <text x="1239" y="138" text-anchor="middle" font-family="Liberation Sans" font-size="58" font-weight="bold" font-style="italic" fill="#fff">HA</text>
 <rect x="1203" y="189" width="72" height="14" rx="7" fill="#dfa0e8"/>
</g>
<path stroke="#eee" stroke-width="2" d="M2280 1327 2287 1319 2294 1327"/>
<g stroke="#eee" stroke-width="1.600"><path d="M2372 1313H2388V1331H2372ZM2380 1331V1336M2374 1336H2386M2389 1311H2393V1322H2389"/><path d="M2408 1319V1327H2412L2418 1332V1314L2412 1319ZM2422 1318C2424 1321 2424 1325 2422 1328M2426 1315C2430 1320 2430 1326 2426 1331"/></g>
<rect x="2549" y="1292" width="6" height="68" rx="3" fill="#3a3a4a"/><rect x="2549" y="1306" width="6" height="38" fill="#c85a28"/>
</svg>
</body></html>
